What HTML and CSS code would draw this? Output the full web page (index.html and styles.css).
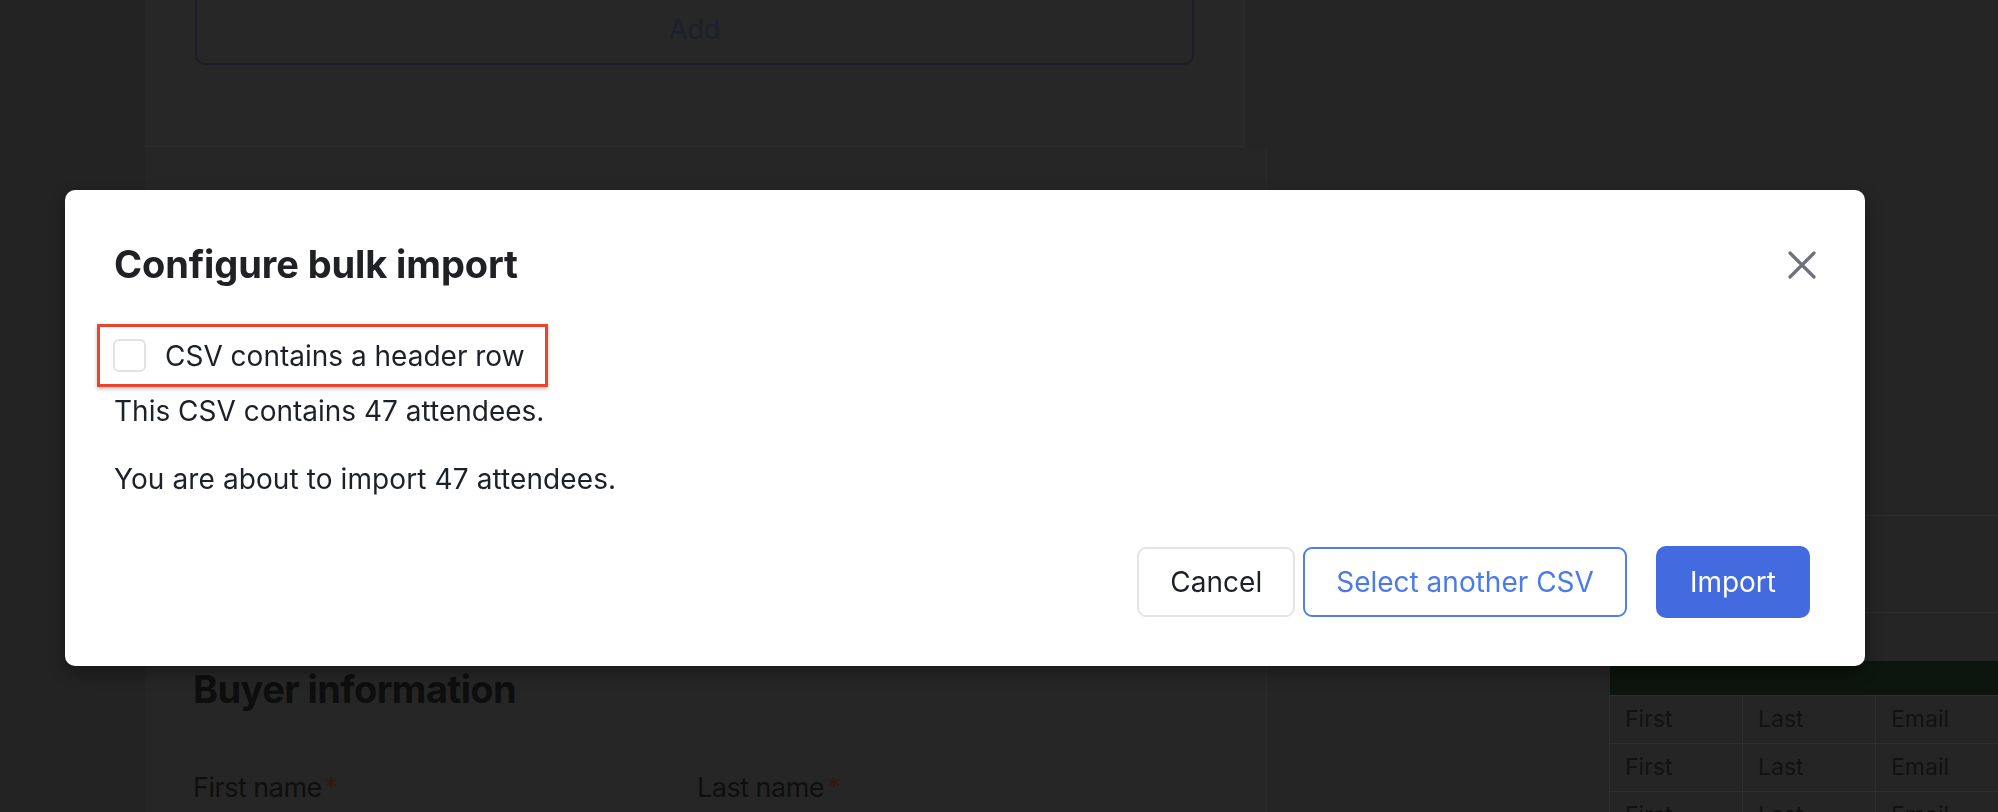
FILE: index.html
```html
<!DOCTYPE html>
<html lang="en">
  <head>
    <meta charset="UTF-8" />
    <meta name="viewport" content="width=device-width, initial-scale=1.0" />
    <title>Configure bulk import</title>
    <link rel="stylesheet" href="styles.css">
  </head>
  <body>
    <div class="page">
      <aside class="gutter"></aside>

      <main class="main">
        <section class="tickets">
          <button class="add-btn">Add</button>
        </section>
        <section class="buyer">
          <h2>Buyer information</h2>
          <div class="field-row">
            <label>First name<span class="req">*</span></label>
            <label>Last name<span class="req">*</span></label>
          </div>
        </section>
      </main>

      <aside class="summary">
        <div class="summary-top"></div>
        <div class="summary-band"></div>
        <table class="preview">
          <colgroup>
            <col class="col-first">
            <col class="col-last">
            <col class="col-email">
          </colgroup>
          <thead>
            <tr><th colspan="3"></th></tr>
          </thead>
          <tbody>
            <tr><td>First</td><td>Last</td><td>Email</td></tr>
            <tr><td>First</td><td>Last</td><td>Email</td></tr>
            <tr><td>First</td><td>Last</td><td>Email</td></tr>
          </tbody>
        </table>
      </aside>
    </div>

    <div class="modal" role="dialog">
      <div class="modal-header">
        <h1>Configure bulk import</h1>
        <button class="close-btn" aria-label="Close">
          <svg width="28" height="28" viewBox="0 0 28 28">
            <path d="M2 2 L26 26 M26 2 L2 26" stroke="#6c717a" stroke-width="3.2" stroke-linecap="round" fill="none" />
          </svg>
        </button>
      </div>

      <label class="header-check">
        <span class="checkbox"></span>
        CSV contains a header row
      </label>

      <p class="count">This CSV contains 47 attendees.</p>
      <p class="count about">You are about to import 47 attendees.</p>

      <div class="modal-actions">
        <button class="btn btn-cancel">Cancel</button>
        <button class="btn btn-outline">Select another CSV</button>
        <button class="btn btn-primary">Import</button>
      </div>
    </div>
  </body>
</html>
```

FILE: styles.css
```css
* {
  box-sizing: border-box;
}

body {
  margin: 0;
  height: 100vh;
  overflow: hidden;
  background: #252525;
  font-family: 'Inter', 'Lato', sans-serif;
}

button {
  font-family: inherit;
  cursor: pointer;
}

/* page behind the dialog (already dimmed) */

.page {
  display: flex;
  height: 100%;
}

.gutter {
  flex-shrink: 0;
  width: 145px;
  background: #232323;
}

.main {
  flex-shrink: 0;
  width: 1122px;
  display: flex;
  flex-direction: column;
}

.tickets {
  width: 1100px;
  height: 147px;
  padding: 0 50px;
  background: #272727;
  border-bottom: 1px solid #2c2c2c;
  border-right: 1px solid #2a2a2a;
}

.add-btn {
  display: block;
  width: 100%;
  height: 100px;
  margin-top: -35px;
  border: 2px solid #1b1d2b;
  border-radius: 10px;
  background: transparent;
  color: #1d1f30;
  font-size: 27px;
  padding-top: 30px;
}

.buyer {
  flex: 1;
  padding: 0 48px;
  background: #262626;
  border-right: 1px solid #2b2b2b;
}

.buyer h2 {
  margin: 512px 0 0;
  font-size: 38px;
  line-height: 60px;
  font-weight: 700;
  color: #0e0e0e;
  letter-spacing: -0.6px;
}

.field-row {
  display: flex;
  margin-top: 52px;
}

.field-row label {
  width: 504px;
  font-size: 27px;
  color: #0f0f0f;
  letter-spacing: -0.5px;
}

.req {
  color: #3a1512;
  margin-left: 3px;
}

.summary {
  flex: 1;
  min-width: 0;
  overflow: hidden;
  background: #252525;
}

.summary-top {
  height: 516px;
  border-bottom: 1px solid #2d2d2d;
}

.summary-band {
  height: 97px;
  border-bottom: 1px solid #2d2d2d;
  margin-left: 342px;
}

.preview {
  margin: 48px 0 0 342px;
  border-collapse: collapse;
  table-layout: fixed;
  width: 500px;
  font-size: 23px;
  color: #121212;
}

.col-first,
.col-last {
  width: 133px;
}

.preview th {
  height: 34px;
  background: #0c150e;
}

.preview td {
  height: 48px;
  padding: 0 15px;
  border: 1px solid #2e2e2e;
}

/* dialog */

.modal {
  position: fixed;
  left: 65px;
  top: 190px;
  width: 1800px;
  height: 476px;
  padding: 52px 55px 0 49px;
  background: #fff;
  border-radius: 10px;
  box-shadow: 0 6px 16px rgba(0, 0, 0, 0.35);
  color: #1c2029;
}

.modal-header {
  display: flex;
  justify-content: space-between;
  align-items: center;
  height: 45px;
}

.modal-header h1 {
  margin: 0;
  font-size: 38px;
  line-height: 45px;
  font-weight: 700;
  color: #202124;
  letter-spacing: -0.1px;
}

.close-btn {
  width: 40px;
  height: 40px;
  margin-right: -12px;
  padding: 0;
  border: none;
  background: none;
  display: flex;
  align-items: center;
  justify-content: center;
}

.header-check {
  display: inline-flex;
  align-items: center;
  height: 63px;
  margin: 37px 0 0 -17px;
  padding: 0 20px 0 13px;
  border: 3px solid #e8452c;
  box-shadow: 0 2px 4px rgba(0, 0, 0, 0.25);
  font-size: 28px;
  gap: 19px;
}

.checkbox {
  width: 33px;
  height: 33px;
  border: 2px solid #e2e2e2;
  border-radius: 6px;
}

.count {
  margin: 6px 0 0;
  font-size: 28px;
  line-height: 36px;
}

.count.about {
  margin-top: 32px;
  letter-spacing: 0.1px;
}

.modal-actions {
  display: flex;
  justify-content: flex-end;
  align-items: center;
  margin-top: 49px;
}

.btn {
  height: 70px;
  padding: 0 31px;
  border-radius: 9px;
  font-size: 28px;
  background: #fff;
}

.btn-cancel {
  border: 2px solid #e4e4e4;
  color: #1c2029;
}

.btn-outline {
  margin-left: 8px;
  border: 2px solid #4f7fe9;
  color: #4a7be8;
}

.btn-primary {
  height: 72px;
  margin-left: 29px;
  border: none;
  border-radius: 10px;
  background: #436ade;
  color: #fff;
  padding: 0 34px;
}
```
